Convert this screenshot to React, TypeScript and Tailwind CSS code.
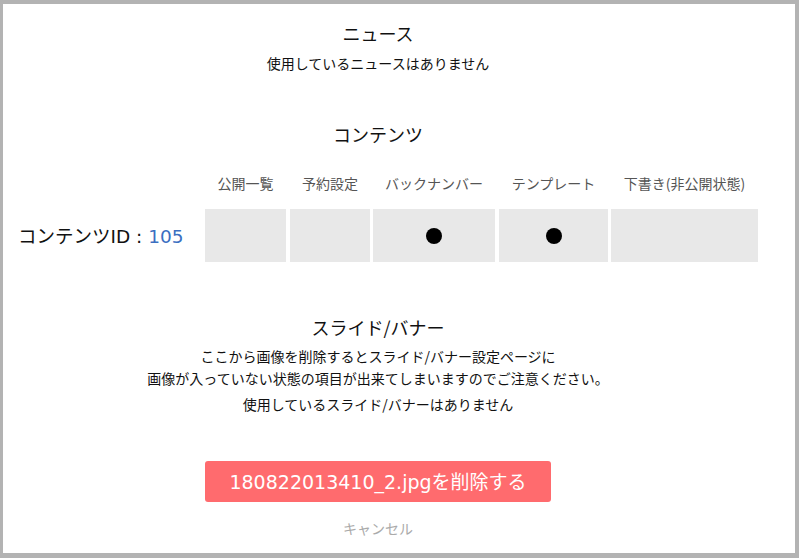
import React from "react";

const font = { fontFamily: '"Noto Sans CJK JP", "Noto Sans", sans-serif' };
const latin = { fontFamily: '"DejaVu Sans", "Noto Sans CJK JP", sans-serif' };

export default function App() {
  const cols = [
    { label: "公開一覧", w: "w-[81px]", ml: "ml-0", dot: false },
    { label: "予約設定", w: "w-[80px]", ml: "ml-[4px]", dot: false },
    { label: "バックナンバー", w: "w-[122px]", ml: "ml-[3px]", dot: true },
    { label: "テンプレート", w: "w-[109px]", ml: "ml-[4px]", dot: true },
    { label: "下書き(非公開状態)", w: "w-[147px]", ml: "ml-[3px]", dot: false },
  ];
  return (
    <div
      className="w-[799px] h-[558px] bg-[#b3b3b3] pt-[4px] pl-[3px] pr-[4px] pb-[5px] overflow-hidden"
      style={font}
    >
      <div className="h-full w-full bg-white pr-[42px] flex flex-col text-[#111]">
        <div className="mt-[16px] text-center text-[18px] leading-[26px]">ニュース</div>
        <div className="mt-[7px] text-center text-[14px] leading-[20px]">
          使用しているニュースはありません
        </div>

        <div className="mt-[48px] text-center text-[18px] leading-[26px]">コンテンツ</div>

        <div className="mt-[26px] flex pl-[202px]">
          {cols.map((c) => (
            <div
              key={c.label}
              className={`${c.w} ${c.ml} shrink-0 text-center text-[14px] leading-[20px] text-[#555] whitespace-nowrap`}
            >
              {c.label}
            </div>
          ))}
        </div>

        <div className="mt-[16px] flex items-center pl-[15px]">
          <div className="w-[187px] shrink-0 text-[18.5px] leading-[26px] whitespace-nowrap">
            コンテンツ<span style={latin}>ID : </span>
            <span className="text-[#3b6fc1]" style={latin}>
              105
            </span>
          </div>
          {cols.map((c) => (
            <div
              key={c.label}
              className={`${c.w} ${c.ml} shrink-0 h-[53px] bg-[#e8e8e8] flex items-center justify-center`}
            >
              {c.dot && <div className="w-[16px] h-[16px] rounded-full bg-black" />}
            </div>
          ))}
        </div>

        <div className="mt-[52px] text-center text-[18px] leading-[26px]">スライド/バナー</div>
        <div className="mt-[5px] text-center text-[14px] leading-[22px]">
          ここから画像を削除するとスライド/バナー設定ページに
          <br />
          画像が入っていない状態の項目が出来てしまいますのでご注意ください。
        </div>
        <div className="mt-[5px] text-center text-[14px] leading-[20px]">
          使用しているスライド/バナーはありません
        </div>

        <div className="mt-[47px] flex justify-center">
          <button className="w-[346px] h-[41px] rounded-[3px] bg-[#ff6b6e] text-white text-[19px] leading-[26px]">
            <span style={latin}>180822013410_2.jpg</span>を削除する
          </button>
        </div>
        <div className="mt-[16px] text-center text-[14px] leading-[20px] text-[#aaa]">
          キャンセル
        </div>
      </div>
    </div>
  );
}
